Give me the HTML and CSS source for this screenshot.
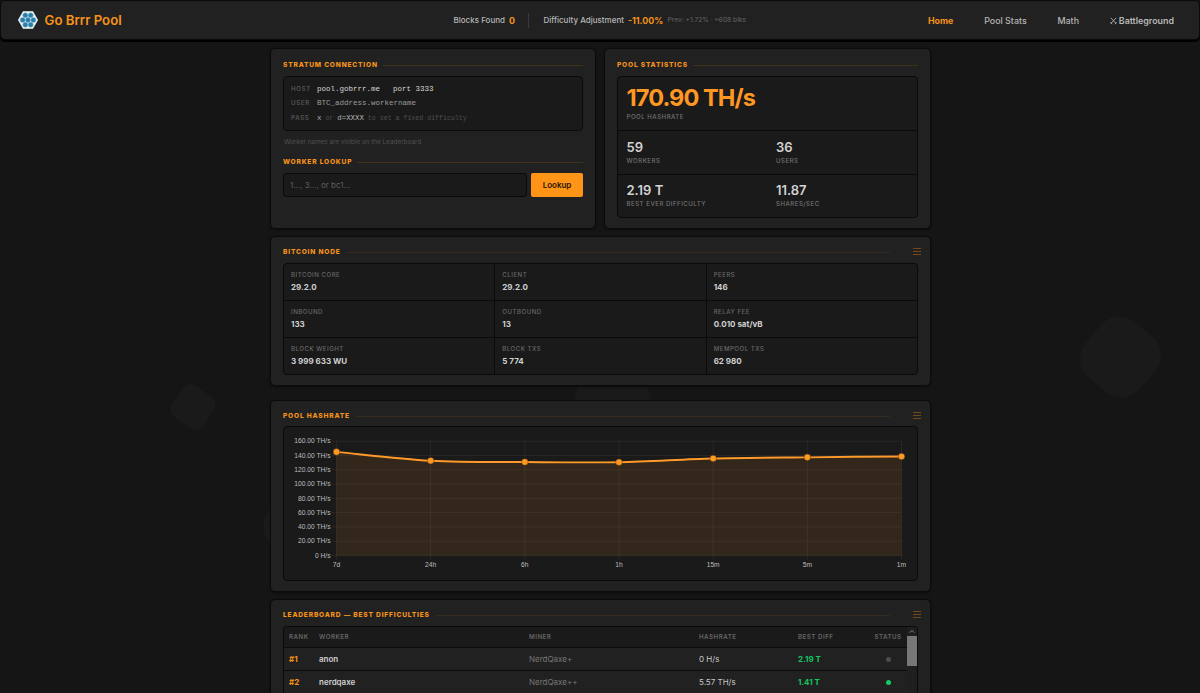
FILE: index.html
```
<!DOCTYPE html>
<html lang="en">

<head>
    <meta charset="UTF-8">
    <meta name="viewport" content="width=device-width, initial-scale=1.0">
    <title>Go Brrr Pool</title>
    <link rel="stylesheet" href="styles.css">
</head>

<body>
    <div class="bg">
        <div class="shape shape1"></div>
        <div class="shape shape2"></div>
        <div class="shape shape3"></div>
        <div class="shape shape4"></div>
    </div>

    <header class="navbar">
        <a class="brand">
            <svg class="logo" viewBox="0 0 20 18">
                <path d="M5.2 0.4h9.6L19.7 9l-4.9 8.6H5.2L0.3 9z" fill="#f2f7fa" stroke="#f2f7fa" stroke-width="0.6" stroke-linejoin="round"/>
                <g fill="#2c7fa8" stroke="#6fb4d4" stroke-width="0.4">
                    <circle cx="10" cy="9" r="2.5"/>
                    <circle cx="4.6" cy="9" r="2.5"/>
                    <circle cx="15.4" cy="9" r="2.5"/>
                    <circle cx="7.3" cy="4.3" r="2.5"/>
                    <circle cx="12.7" cy="4.3" r="2.5"/>
                    <circle cx="7.3" cy="13.7" r="2.5"/>
                    <circle cx="12.7" cy="13.7" r="2.5"/>
                </g>
            </svg>
            <span>Go Brrr Pool</span>
        </a>
        <div class="ticker">
            <span class="ticker-label">Blocks Found</span>
            <span class="ticker-value">0</span>
            <span class="divider"></span>
            <span class="ticker-label">Difficulty Adjustment</span>
            <span class="ticker-value">-11.00%</span>
            <span class="ticker-sub">Prev: +1.72% · ~608 blks</span>
        </div>
        <nav>
            <a class="active">Home</a>
            <a>Pool Stats</a>
            <a>Math</a>
            <a class="battle"><svg viewBox="0 0 7 8"><path d="M0.8 0.8L6 6.4M6.2 0.8L1 6.4M0.4 5.2l1.8 2M6.6 5.2l-1.8 2"/></svg>Battleground</a>
        </nav>
    </header>

    <main class="container">
        <div class="top-row">
            <section class="card">
                <h2 class="title">Stratum Connection</h2>
                <div class="inset stratum">
                    <div class="line"><span class="key">HOST</span><span class="host">pool.gobrrr.me</span><span class="host port">port 3333</span></div>
                    <div class="line"><span class="key">USER</span><span class="user">BTC_address.workername</span></div>
                    <div class="line"><span class="key">PASS</span><span class="pass"><b>x</b> or <b>d=XXXX</b> to set a fixed difficulty</span></div>
                </div>
                <p class="note">Worker names are visible on the Leaderboard</p>
                <h2 class="title">Worker Lookup</h2>
                <div class="lookup">
                    <input type="text" placeholder="1..., 3..., or bc1...">
                    <button>Lookup</button>
                </div>
            </section>

            <section class="card">
                <h2 class="title">Pool Statistics</h2>
                <div class="inset stats">
                    <div class="stat main"><strong>170.90 TH/s</strong><span>Pool Hashrate</span></div>
                    <div class="stat"><strong>59</strong><span>Workers</span></div>
                    <div class="stat"><strong>36</strong><span>Users</span></div>
                    <div class="stat"><strong>2.19 T</strong><span>Best Ever Difficulty</span></div>
                    <div class="stat"><strong>11.87</strong><span>Shares/sec</span></div>
                </div>
            </section>
        </div>

        <section class="card node">
            <h2 class="title with-grip">Bitcoin Node</h2>
            <span class="grip"></span>
            <div class="inset node-grid">
                <div><span>Bitcoin Core</span><strong>29.2.0</strong></div>
                <div><span>Client</span><strong>29.2.0</strong></div>
                <div><span>Peers</span><strong>146</strong></div>
                <div><span>Inbound</span><strong>133</strong></div>
                <div><span>Outbound</span><strong>13</strong></div>
                <div><span>Relay Fee</span><strong>0.010 sat/vB</strong></div>
                <div><span>Block Weight</span><strong>3 999 633 WU</strong></div>
                <div><span>Block Txs</span><strong>5 774</strong></div>
                <div><span>Mempool Txs</span><strong>62 980</strong></div>
            </div>
        </section>

        <section class="card chart-card">
            <h2 class="title with-grip">Pool Hashrate</h2>
            <span class="grip"></span>
            <div class="inset chart">
                <svg id="chart" width="632" height="153"></svg>
            </div>
        </section>

        <section class="card board">
            <h2 class="title with-grip">Leaderboard — Best Difficulties</h2>
            <span class="grip"></span>
            <div class="inset board-box">
                <table>
                    <thead>
                        <tr><th class="rank">Rank</th><th class="worker">Worker</th><th class="miner">Miner</th><th class="rate">Hashrate</th><th class="diff">Best Diff</th><th class="status">Status</th></tr>
                    </thead>
                    <tbody>
                        <tr><td class="rank">#1</td><td class="worker">anon</td><td class="miner">NerdQaxe+</td><td>0 H/s</td><td class="diff">2.19 T</td><td class="status"><i class="dot"></i></td></tr>
                        <tr><td class="rank">#2</td><td class="worker">nerdqaxe</td><td class="miner">NerdQaxe++</td><td>5.57 TH/s</td><td class="diff">1.41 T</td><td class="status"><i class="dot on"></i></td></tr>
                    </tbody>
                </table>
                <div class="scrollbar">
                    <svg viewBox="0 0 10 9"><path d="M2.8 5.6L5 3.4l2.2 2.2"/></svg>
                    <div class="thumb"></div>
                </div>
            </div>
        </section>
    </main>

    <script>
        const labels = ['7d', '24h', '6h', '1h', '15m', '5m', '1m'];
        const values = [145, 132.7, 130.8, 130.6, 135.8, 137.4, 138.6];
        const left = 52.5, right = 617.5, top0 = 14.2, bottom = 128.5;
        const x = i => left + (right - left) * i / (labels.length - 1);
        const y = v => bottom - (bottom - top0) * v / 160;
        let out = '';

        for (let v = 0; v <= 160; v += 20) {
            const name = v ? v.toFixed(2) + ' TH/s' : '0 H/s';
            out += `<line class="grid" x1="${left - 5}" x2="${right}" y1="${y(v)}" y2="${y(v)}"/>`;
            out += `<text x="${left - 6}" y="${y(v) + 2.2}" text-anchor="end">${name}</text>`;
        }

        // smooth line through the points
        let path = `M${x(0)} ${y(values[0])}`;
        for (let i = 1; i < values.length; i++) {
            const slope = k => (k <= 0 || k >= values.length - 1) ? 0 : (y(values[k + 1]) - y(values[k - 1])) * 0.15;
            path += ` C${x(i - 1) + 30} ${y(values[i - 1]) + (i === 1 ? 3 : slope(i - 1))} ${x(i) - 30} ${y(values[i]) - slope(i)} ${x(i)} ${y(values[i])}`;
        }
        out += `<path class="area" d="${path} V${bottom} H${left} Z"/>`;

        labels.forEach((label, i) => {
            out += `<line class="grid" x1="${x(i)}" x2="${x(i)}" y1="${top0}" y2="${bottom + 4}"/>`;
            out += `<text x="${x(i)}" y="${bottom + 11.5}" text-anchor="middle">${label}</text>`;
        });
        out += `<path class="curve" d="${path}"/>`;
        values.forEach((v, i) => {
            out += `<circle cx="${x(i)}" cy="${y(v)}" r="3.3"/>`;
        });
        document.getElementById('chart').innerHTML = out;
    </script>
</body>

</html>
```
FILE: styles.css
```
* {
    box-sizing: border-box;
}

body {
    margin: 0;
    height: 693px;
    overflow: hidden;
    position: relative;
    background: #151515;
    color: #c8c8c8;
    font-family: Inter, sans-serif;
    font-size: 8px;
}

/* background shapes */
.bg {
    position: absolute;
    inset: 0;
    z-index: -1;
}

.shape {
    position: absolute;
    background: #1a1a1a;
}

.shape1 {
    left: 1085px;
    top: 321px;
    width: 71px;
    height: 72px;
    border-radius: 24px;
    transform: rotate(40deg);
}

.shape2 {
    left: 174px;
    top: 388px;
    width: 38px;
    height: 38px;
    border-radius: 10px;
    transform: rotate(35deg);
}

.shape3 {
    left: 574px;
    top: 370px;
    width: 77px;
    height: 77px;
    border-radius: 32px;
}

.shape4 {
    left: 264px;
    top: 503px;
    width: 46px;
    height: 46px;
    border-radius: 20px;
}

.navbar {
    display: grid;
    grid-template-columns: 435.5px 1fr auto;
    align-items: center;
    height: 40px;
    padding: 0 25px 0 17px;
    background: #212121;
    border: 1px solid #0a0a0a;
    border-radius: 5px;
    box-shadow: 0 2px 0 #000;
}

.brand {
    display: flex;
    align-items: center;
    gap: 6.5px;
    color: #f7931a;
    font-size: 13.2px;
    font-weight: 600;
}

.logo {
    width: 20px;
    height: 18px;
}

.ticker {
    display: flex;
    align-items: center;
    white-space: nowrap;
}

.ticker-label {
    font-size: 8px;
    font-weight: 500;
    color: #b8b8b8;
}

.ticker-value {
    margin: 0 4.5px 0 4px;
    font-size: 8.8px;
    font-weight: 700;
    color: #f7931a;
}

.ticker-sub {
    font-size: 6.65px;
    color: #666;
}

.divider {
    width: 1px;
    height: 15px;
    margin: 0 14px 0 9px;
    background: #3a3a3a;
}

nav {
    display: flex;
    gap: 30.8px;
    font-size: 8.9px;
    font-weight: 500;
    color: #b8b8b8;
}

nav .active {
    color: #f7931a;
    font-weight: 700;
}

nav .battle {
    font-weight: 600;
}

.battle svg {
    width: 7px;
    height: 8px;
    margin-right: 2px;
    vertical-align: -1px;
    fill: none;
    stroke: #b4b4b4;
    stroke-width: 0.9;
}

.container {
    width: 661px;
    margin: 8px 0 0 270px;
}

.top-row {
    display: grid;
    grid-template-columns: 326px 327px;
    gap: 8px;
    height: 181px;
}

.card {
    position: relative;
    padding: 11px 12px 0;
    background: #212121;
    border: 1px solid #0b0b0b;
    border-radius: 5px;
    box-shadow: 0 1px 2px #0c0c0c;
}

.title {
    display: flex;
    align-items: center;
    gap: 5px;
    margin: 0 0 6px;
    height: 9px;
    color: #f7931a;
    font-size: 6.6px;
    font-weight: 800;
    line-height: 9px;
    letter-spacing: 0.82px;
    text-transform: uppercase;
    white-space: nowrap;
}

.top-row .card {
    padding-top: 12px;
}

.title::after {
    content: "";
    flex: 1;
    height: 1px;
    background: #43301b;
}

.with-grip {
    margin-right: 28px;
}

.with-grip::after {
    background: #342b20;
}

.grip {
    position: absolute;
    top: 11px;
    right: 9px;
    width: 8px;
    height: 7px;
    border-top: 1px solid #71491a;
    border-bottom: 1px solid #71491a;
}

.grip::after {
    content: "";
    display: block;
    height: 1px;
    margin-top: 2px;
    background: #71491a;
}

.inset {
    background: #1a1a1a;
    border: 1px solid #0a0a0a;
    border-radius: 4px;
    overflow: hidden;
}

.stratum {
    height: 55px;
    padding: 5px 7px;
}

.line {
    display: flex;
    height: 14.4px;
    line-height: 14.4px;
    font-family: "Liberation Mono", monospace;
    font-size: 7.5px;
}

.key {
    width: 26px;
    font-family: Inter, sans-serif;
    font-size: 6.2px;
    font-weight: 500;
    letter-spacing: 0.65px;
    color: #5e5e5e;
}

.host {
    color: #d6d6d6;
}

.port {
    margin-left: 13px;
}

.user {
    color: #9a9a9a;
}

.pass {
    font-size: 6.6px;
    color: #4f4f4f;
}

.pass b {
    font-size: 7.4px;
    font-weight: 400;
    color: #b0b0b0;
}

.note {
    margin: 7px 1px 11px;
    font-size: 6.5px;
    line-height: 9px;
    color: #505050;
    letter-spacing: -0.06px;
}

.lookup {
    display: flex;
    gap: 4px;
    height: 24px;
}

.lookup input {
    flex: 1;
    min-width: 0;
    padding: 0 6px;
    background: #1a1a1a;
    border: 1px solid #0a0a0a;
    border-radius: 3px;
    font-family: inherit;
    font-size: 8px;
}

.lookup input::placeholder {
    color: #5e5e5e;
}

.lookup button {
    width: 52px;
    padding: 0;
    background: #ff9416;
    border: 0;
    border-radius: 2px;
    color: #241503;
    font-family: inherit;
    font-size: 8px;
    font-weight: 600;
}

.stats {
    display: grid;
    grid-template-columns: 1fr 1fr;
    grid-template-rows: 54px 44px 42px;
    height: 142px;
}

.stat {
    padding: 7px 9px 0 8.5px;
    border-bottom: 1px solid #0a0a0a;
}

.stat:nth-child(n+4) {
    padding-top: 6px;
    border-bottom: 0;
}

.stat strong {
    display: block;
    font-size: 13px;
    font-weight: 600;
    line-height: 18px;
    color: #d2d2d2;
}

.stat span {
    display: block;
    font-size: 6.1px;
    font-weight: 500;
    line-height: 9px;
    letter-spacing: 0.5px;
    text-transform: uppercase;
    color: #747474;
}

.stat.main {
    grid-column: 1 / 3;
}

.main strong {
    font-size: 23.5px;
    font-weight: 700;
    line-height: 28px;
    letter-spacing: -0.9px;
    color: #ff9722;
}

.node {
    height: 150px;
    margin-top: 7px;
}

.node-grid {
    display: grid;
    grid-template-columns: repeat(3, 1fr);
    grid-auto-rows: 36px;
    gap: 1px;
    height: 112px;
    background: #0a0a0a;
}

.node-grid div {
    padding: 6px 7px 0;
    background: #1a1a1a;
}

.node-grid span {
    display: block;
    font-size: 6.1px;
    font-weight: 500;
    line-height: 9px;
    letter-spacing: 0.5px;
    text-transform: uppercase;
    color: #686868;
}

.node-grid strong {
    display: block;
    margin-top: 2px;
    font-size: 8px;
    font-weight: 700;
    line-height: 12px;
    color: #d0d0d0;
}

.chart-card {
    height: 192px;
    margin-top: 14px;
}

.chart-card .title {
    margin-bottom: 5px;
}

.chart {
    height: 155px;
}

.chart svg {
    display: block;
}

.chart text {
    font-family: "Liberation Sans", sans-serif;
    font-size: 6.7px;
    fill: #bebebe;
}

.grid {
    stroke: rgba(255, 255, 255, 0.06);
}

.area {
    fill: rgba(247, 147, 26, 0.11);
}

.curve {
    fill: none;
    stroke: #ff9a2a;
    stroke-width: 1.9;
}

.chart circle {
    fill: #ff9a20;
    stroke: #1a1a1a;
    stroke-width: 0.4;
}

.board {
    height: 94px;
    margin-top: 7px;
    border-bottom: 0;
    border-radius: 5px 5px 0 0;
}

.board .title {
    margin-bottom: 6px;
}

.board-box {
    display: flex;
    height: 67px;
    background: #212121;
    border-bottom: 0;
    border-radius: 4px 4px 0 0;
}

table {
    flex: 1;
    align-self: flex-start;
    border-collapse: collapse;
    table-layout: fixed;
}

th,
td {
    height: 23px;
    padding: 0 0 0 5px;
    text-align: left;
    border-bottom: 1px solid #0c0c0c;
    font-size: 8px;
}

th {
    height: 20px;
    background: #1a1a1a;
    color: #666;
    font-size: 6.2px;
    font-weight: 600;
    letter-spacing: 0.5px;
    text-transform: uppercase;
}

th.rank {
    width: 30px;
}

th.worker {
    width: 210px;
}

th.miner {
    width: 170px;
}

th.rate {
    width: 99px;
}

th.diff {
    width: 76px;
}

td.rank {
    color: #f7931a;
    font-weight: 700;
}

td.worker {
    font-weight: 600;
    color: #d0d0d0;
}

td.miner {
    color: #777;
}

td.diff {
    color: #10c860;
    font-weight: 700;
}

.status {
    padding: 0;
    text-align: center;
}

.dot {
    display: inline-block;
    width: 5px;
    height: 5px;
    border-radius: 50%;
    background: #4c4c4c;
    vertical-align: middle;
}

.dot.on {
    background: #12cc62;
}

.scrollbar {
    width: 10px;
    background: #1f1f1f;
}

.scrollbar svg {
    display: block;
    height: 9px;
    fill: none;
    stroke: #858585;
}

.thumb {
    height: 30px;
    background: #777;
}
```
